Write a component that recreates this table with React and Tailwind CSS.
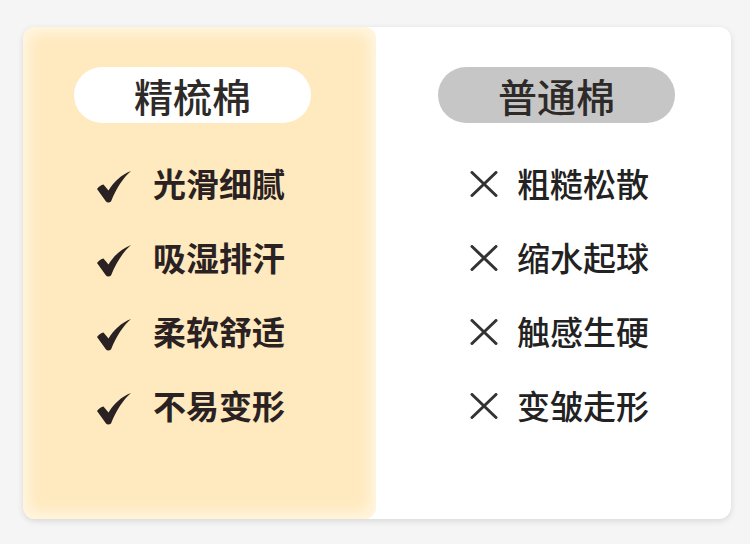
const good = ["光滑细腻", "吸湿排汗", "柔软舒适", "不易变形"];
const bad = ["粗糙松散", "缩水起球", "触感生硬", "变皱走形"];

const font = { fontFamily: '"Noto Sans CJK SC", "Noto Sans", sans-serif' };

function Check() {
  return (
    <svg width="36" height="34" viewBox="0 0 36 34" className="mt-[6px] shrink-0">
      <path
        d="M1 19 C3 16.5 5 15 7.5 14.5 L12.5 20.5 C18 11.5 25 5 35 1 C27 8 20.5 18 15 31.5 C13.5 32.8 11 32.8 10 31.5 Z"
        fill="#2a2222"
      />
    </svg>
  );
}

function Cross() {
  return (
    <svg width="28" height="26" viewBox="0 0 28 26" className="shrink-0">
      <path d="M2 1.5 L26 24.5 M26 1.5 L2 24.5" stroke="#333" strokeWidth="3" strokeLinecap="round" />
    </svg>
  );
}

export default function App() {
  return (
    <main className="h-[544px] w-[750px] bg-[#f5f5f5] pt-[27px] pl-[23px] pr-[19px] pb-[25px]" style={font}>
      <div className="flex h-full rounded-[12px] bg-white shadow-[0_2px_6px_rgba(0,0,0,0.12)]">
        <section className="w-[353px] rounded-[12px] bg-[#ffe9bf] pt-[40px] pl-[51px] shadow-[inset_0_0_14px_6px_rgba(255,248,230,0.9)]">
          <div className="flex h-[56px] w-[237px] items-center justify-center rounded-[28px] bg-white text-[39px] font-medium text-[#2e2a28]">
            精梳棉
          </div>
          <ul className="mt-[24px] pl-[22px]">
            {good.map((t) => (
              <li key={t} className="flex h-[74px] items-center gap-[21px]">
                <Check />
                <span className="text-[33px] font-bold text-[#2a2222]">{t}</span>
              </li>
            ))}
          </ul>
        </section>
        <section className="flex-1 pt-[40px] pl-[62px]">
          <div className="flex h-[56px] w-[237px] items-center justify-center rounded-[28px] bg-[#c6c6c6] text-[39px] font-medium text-[#2e2a28]">
            普通棉
          </div>
          <ul className="mt-[24px] pl-[32px]">
            {bad.map((t) => (
              <li key={t} className="flex h-[74px] items-center gap-[19px]">
                <Cross />
                <span className="text-[33px] font-medium text-[#222]">{t}</span>
              </li>
            ))}
          </ul>
        </section>
      </div>
    </main>
  );
}
